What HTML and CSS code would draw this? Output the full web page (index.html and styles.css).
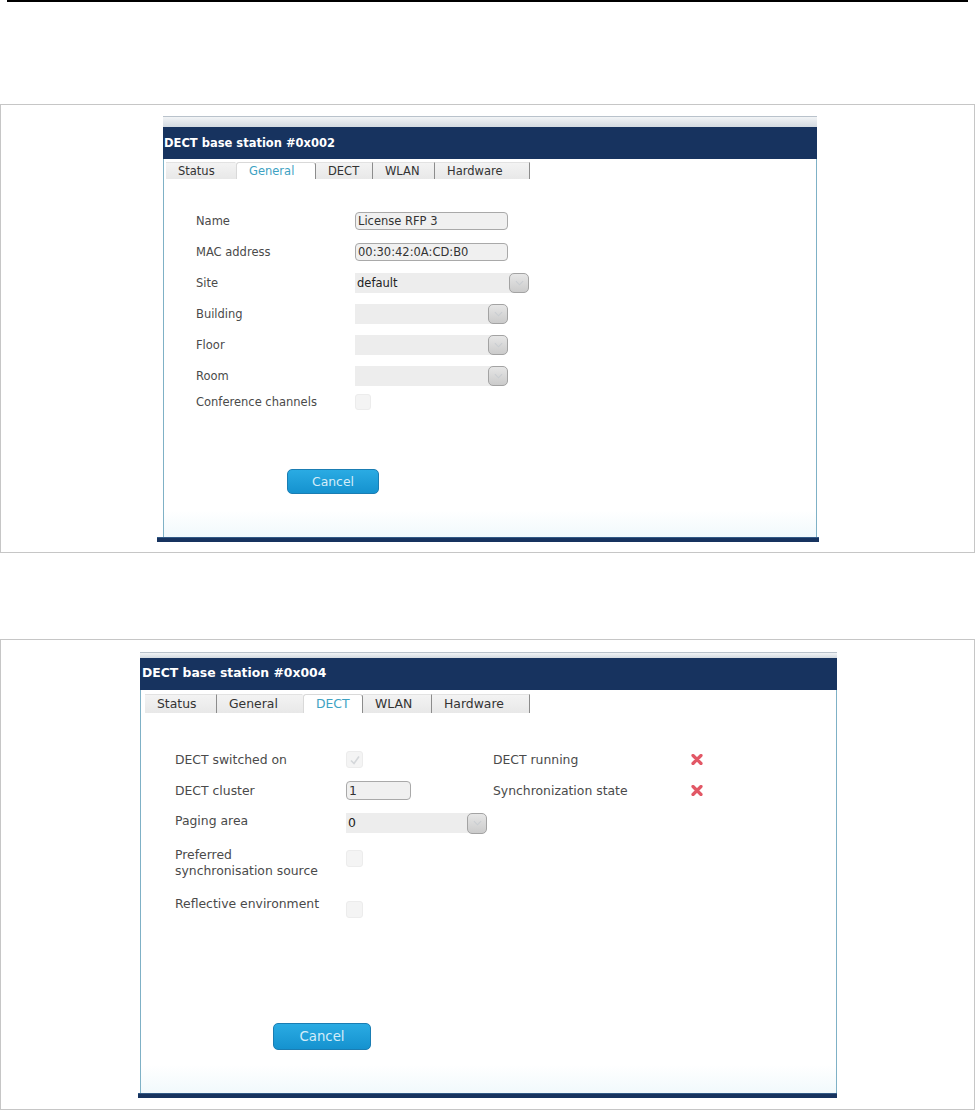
FILE: index.html
```html
<!DOCTYPE html>
<html lang="en">
<head>
    <meta charset="UTF-8">
    <title>DECT base station</title>
    <link rel="stylesheet" href="styles.css">
</head>
<body>
<div class="top-rule"></div>

<div class="shot shot-general">
    <div class="panel panel-general">
        <div class="panel-strip"></div>
        <div class="panel-head">DECT base station #0x002</div>
        <div class="panel-body">
            <div class="tabs">
                <div class="tab">Status</div>
                <div class="tab active">General</div>
                <div class="tab">DECT</div>
                <div class="tab">WLAN</div>
                <div class="tab">Hardware</div>
            </div>
            <div class="form">
                <div class="row">
                    <span class="label">Name</span>
                    <div class="text-input">License RFP 3</div>
                </div>
                <div class="row">
                    <span class="label">MAC address</span>
                    <div class="text-input">00:30:42:0A:CD:B0</div>
                </div>
                <div class="row">
                    <span class="label">Site</span>
                    <div class="select wide">
                        <div class="select-field">default</div>
                        <div class="select-btn"><svg viewBox="0 0 10 6" width="9" height="6"><path d="M1 1l4 4 4-4" fill="none" stroke="#c9cdd1" stroke-width="1.2"/></svg></div>
                    </div>
                </div>
                <div class="row">
                    <span class="label">Building</span>
                    <div class="select">
                        <div class="select-field"></div>
                        <div class="select-btn"><svg viewBox="0 0 10 6" width="9" height="6"><path d="M1 1l4 4 4-4" fill="none" stroke="#c9cdd1" stroke-width="1.2"/></svg></div>
                    </div>
                </div>
                <div class="row">
                    <span class="label">Floor</span>
                    <div class="select">
                        <div class="select-field"></div>
                        <div class="select-btn"><svg viewBox="0 0 10 6" width="9" height="6"><path d="M1 1l4 4 4-4" fill="none" stroke="#c9cdd1" stroke-width="1.2"/></svg></div>
                    </div>
                </div>
                <div class="row">
                    <span class="label">Room</span>
                    <div class="select">
                        <div class="select-field"></div>
                        <div class="select-btn"><svg viewBox="0 0 10 6" width="9" height="6"><path d="M1 1l4 4 4-4" fill="none" stroke="#c9cdd1" stroke-width="1.2"/></svg></div>
                    </div>
                </div>
                <div class="row row-check">
                    <span class="label">Conference channels</span>
                    <div class="checkbox"></div>
                </div>
            </div>
            <button class="cancel-btn" type="button">Cancel</button>
        </div>
        <div class="panel-foot"></div>
    </div>
</div>

<div class="shot shot-dect">
    <div class="panel panel-dect">
        <div class="panel-strip"></div>
        <div class="panel-head">DECT base station #0x004</div>
        <div class="panel-body">
            <div class="tabs">
                <div class="tab">Status</div>
                <div class="tab">General</div>
                <div class="tab active">DECT</div>
                <div class="tab">WLAN</div>
                <div class="tab">Hardware</div>
            </div>
            <div class="form form-cols">
                <div class="col-left">
                    <div class="row">
                        <span class="label">DECT switched on</span>
                        <div class="checkbox checked"><svg viewBox="0 0 12 12" width="12" height="12"><path d="M2 6.5l3 3 5-7" fill="none" stroke="#d4d7da" stroke-width="1.6"/></svg></div>
                    </div>
                    <div class="row">
                        <span class="label">DECT cluster</span>
                        <div class="text-input short">1</div>
                    </div>
                    <div class="row row-paging">
                        <span class="label">Paging area</span>
                        <div class="select">
                            <div class="select-field">0</div>
                            <div class="select-btn"><svg viewBox="0 0 10 6" width="9" height="6"><path d="M1 1l4 4 4-4" fill="none" stroke="#c9cdd1" stroke-width="1.2"/></svg></div>
                        </div>
                    </div>
                    <div class="row row-pref">
                        <span class="label">Preferred<br>synchronisation source</span>
                        <div class="checkbox"></div>
                    </div>
                    <div class="row row-refl">
                        <span class="label">Reflective environment</span>
                        <div class="checkbox"></div>
                    </div>
                </div>
                <div class="col-right">
                    <div class="row">
                        <span class="label label-status">DECT running</span>
                        <svg class="fail-icon" viewBox="0 0 12 11" width="12" height="11"><path d="M2 1.5l8 8M10 1.5l-8 8" stroke="#e25866" stroke-width="3.2" stroke-linecap="round"/></svg>
                    </div>
                    <div class="row">
                        <span class="label label-status">Synchronization state</span>
                        <svg class="fail-icon" viewBox="0 0 12 11" width="12" height="11"><path d="M2 1.5l8 8M10 1.5l-8 8" stroke="#e25866" stroke-width="3.2" stroke-linecap="round"/></svg>
                    </div>
                </div>
            </div>
            <button class="cancel-btn" type="button">Cancel</button>
        </div>
        <div class="panel-foot"></div>
    </div>
</div>
</body>
</html>
```

FILE: styles.css
```css
* {
    box-sizing: border-box;
}
body {
    margin: 0;
    background: #fff;
    font-family: "DejaVu Sans", Verdana, sans-serif;
    color: #4a4a4a;
}
.top-rule {
    height: 2px;
    margin: 0 8px 0 7px;
    background: #000;
}
.shot {
    margin: 102px 1px 0 0;
    border: 1px solid #c6c6c6;
}
.shot-general {
    padding: 11px 0 10px 0;
}
.shot-dect {
    margin-top: 86px;
    padding: 12px 0 11px 0;
}

/* panel */
.panel-general {
    width: 654px;
    margin-left: 162px;
    font-size: 11.5px;
}
.panel-dect {
    width: 697px;
    margin-left: 139px;
    font-size: 12.4px;
}
.panel-strip {
    height: 11px;
    background: linear-gradient(#f2f4f6, #d3dae1);
    border-top: 1px solid #b9c2cb;
}
.panel-dect .panel-strip {
    height: 6px;
}
.panel-head {
    height: 32px;
    line-height: 32px;
    padding-left: 1px;
    background: #17335f;
    color: #fff;
    font-weight: bold;
}
.panel-dect .panel-head {
    line-height: 30px;
    padding-left: 2px;
}
.panel-body {
    height: 378px;
    padding-top: 3px;
    border-left: 1px solid #7fb1c6;
    border-right: 1px solid #7fb1c6;
    background: linear-gradient(#fff 93%, #f1f9fc);
}
.panel-dect .panel-body {
    height: 403px;
    padding-top: 4px;
}
.panel-foot {
    height: 5px;
    margin: 0 -2px 0 -6px;
    background: #17335f;
    border-top: 1px solid #335a86;
}
.panel-dect .panel-foot {
    margin: 0 0 0 -2px;
}

/* tabs */
.tabs {
    display: flex;
    height: 17px;
    margin-left: 2px;
}
.panel-dect .tabs {
    height: 19px;
    margin-left: 4px;
}
.tab {
    position: relative;
    padding-left: 12px;
    line-height: 17px;
    color: #333;
    background: linear-gradient(#f3f3f3, #e8e8e8);
    border-top: 1px solid #e2e2e2;
    border-right: 1px solid #8c8c8c;
}
.panel-dect .tab {
    line-height: 18px;
}
.tab:has(+ .active) {
    border-right-color: transparent;
}
.tab.active {
    background: #fff;
    color: #3ea2c3;
    border: 1px solid #d9d9d9;
    border-bottom: none;
    border-radius: 3px 3px 0 0;
    border-right-color: #8c8c8c;
}
.panel-general .tab:nth-child(1) { width: 70px; }
.panel-general .tab:nth-child(2) { width: 80px; }
.panel-general .tab:nth-child(3) { width: 57px; }
.panel-general .tab:nth-child(4) { width: 62px; }
.panel-general .tab:nth-child(5) { width: 95px; }
.panel-dect .tab:nth-child(1) { width: 72px; }
.panel-dect .tab:nth-child(2) { width: 86px; }
.panel-dect .tab:nth-child(3) { width: 60px; }
.panel-dect .tab:nth-child(4) { width: 69px; }
.panel-dect .tab:nth-child(5) { width: 98px; }

/* form */
.form {
    padding: 26px 0 0 32px;
}
.panel-dect .form {
    padding: 31px 0 0 34px;
}
.form-cols {
    display: flex;
}
.row {
    display: flex;
    align-items: center;
    height: 31px;
}
.label {
    width: 159px;
    flex-shrink: 0;
    line-height: 16px;
}
.panel-dect .label {
    width: 171px;
}
.panel-dect .label-status {
    width: 198px;
}
.row-check {
    align-items: flex-start;
    padding-top: 3px;
}
.row-paging {
    height: 34px;
}
.row-paging .label {
    margin-top: -4px;
}
.row-pref {
    height: 52px;
    align-items: flex-start;
    padding-top: 7px;
}
.row-pref .checkbox {
    margin-top: 3px;
}
.row-refl {
    height: 30px;
    align-items: flex-start;
    padding-top: 4px;
}
.row-refl .checkbox {
    margin-top: 5px;
}
.col-left {
    width: 318px;
}
.text-input {
    width: 153px;
    height: 18px;
    padding-left: 2px;
    line-height: 16px;
    color: #333;
    background: #f0f0f0;
    border: 1px solid #a9a9a9;
    border-radius: 4px;
}
.text-input.short {
    width: 65px;
    height: 19px;
    line-height: 17px;
}
.select {
    display: flex;
    align-items: center;
}
.select-field {
    width: 137px;
    height: 20px;
    padding-left: 2px;
    line-height: 20px;
    color: #222;
    background: #ededed;
}
.select.wide .select-field {
    width: 158px;
}
.panel-dect .select-field {
    width: 125px;
}
.select-btn {
    display: flex;
    align-items: center;
    justify-content: center;
    width: 20px;
    height: 20px;
    margin-left: -4px;
    background: linear-gradient(#e6e6e6, #cbcbcb);
    border: 1px solid #a3a3a3;
    border-radius: 5px;
}
.panel-dect .select-btn {
    height: 21px;
}
.checkbox {
    display: flex;
    align-items: center;
    justify-content: center;
    width: 16px;
    height: 16px;
    background: #f4f4f4;
    border: 1px solid #ececec;
    border-radius: 3px;
}
.panel-dect .checkbox {
    width: 17px;
    height: 17px;
}
.fail-icon {
    display: block;
}

/* button */
.cancel-btn {
    display: block;
    width: 92px;
    height: 25px;
    margin: 47px 0 0 123px;
    padding: 0;
    font-family: "DejaVu Sans", Verdana, sans-serif;
    font-size: 12.4px;
    color: #d4edf9;
    background: linear-gradient(#2aabe3, #1592cf);
    border: 1px solid #1a7db3;
    border-radius: 5px;
}
.panel-dect .cancel-btn {
    width: 98px;
    height: 27px;
    margin: 101px 0 0 132px;
    font-size: 13.3px;
}
```
